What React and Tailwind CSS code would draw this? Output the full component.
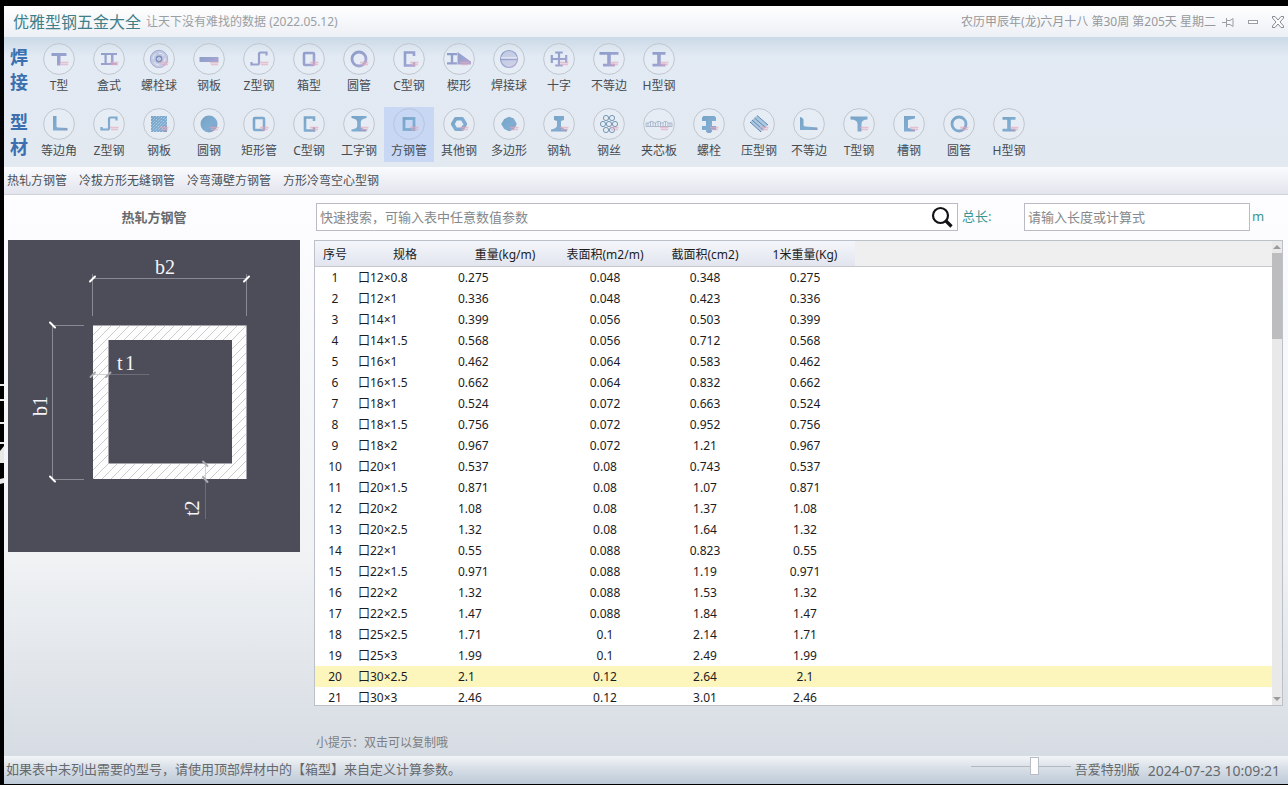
import React from 'react';

const ROWS = [
  ['口12×0.8', '0.275', '0.048', '0.348'],
  ['口12×1', '0.336', '0.048', '0.423'],
  ['口14×1', '0.399', '0.056', '0.503'],
  ['口14×1.5', '0.568', '0.056', '0.712'],
  ['口16×1', '0.462', '0.064', '0.583'],
  ['口16×1.5', '0.662', '0.064', '0.832'],
  ['口18×1', '0.524', '0.072', '0.663'],
  ['口18×1.5', '0.756', '0.072', '0.952'],
  ['口18×2', '0.967', '0.072', '1.21'],
  ['口20×1', '0.537', '0.08', '0.743'],
  ['口20×1.5', '0.871', '0.08', '1.07'],
  ['口20×2', '1.08', '0.08', '1.37'],
  ['口20×2.5', '1.32', '0.08', '1.64'],
  ['口22×1', '0.55', '0.088', '0.823'],
  ['口22×1.5', '0.971', '0.088', '1.19'],
  ['口22×2', '1.32', '0.088', '1.53'],
  ['口22×2.5', '1.47', '0.088', '1.84'],
  ['口25×2.5', '1.71', '0.1', '2.14'],
  ['口25×3', '1.99', '0.1', '2.49'],
  ['口30×2.5', '2.1', '0.12', '2.64'],
  ['口30×3', '2.46', '0.12', '3.01'],
];

const HEADERS = ['序号', '规格', '重量(kg/m)', '表面积(m2/m)', '截面积(cm2)', '1米重量(Kg)'];

const WELD = [
  ['T型', 'tee'], ['盒式', 'twin'], ['螺栓球', 'ball'], ['钢板', 'bar'], ['Z型钢', 'zed'],
  ['箱型', 'box'], ['圆管', 'ring'], ['C型钢', 'cee'], ['楔形', 'wedge'], ['焊接球', 'weldball'],
  ['十字', 'cross'], ['不等边', 'wideI'], ['H型钢', 'aitch'],
];

const SECTION = [
  ['等边角', 'angle'], ['Z型钢', 'zed'], ['钢板', 'plate'], ['圆钢', 'disc'], ['矩形管', 'box'],
  ['C型钢', 'cee'], ['工字钢', 'ibeam'], ['方钢管', 'square'], ['其他钢', 'hexring'], ['多边形', 'hex'],
  ['钢轨', 'rail'], ['钢丝', 'wire'], ['夹芯板', 'panel'], ['螺栓', 'bolt'], ['压型钢', 'deck'],
  ['不等边', 'unequal'], ['T型钢', 'teeRound'], ['槽钢', 'channel'], ['圆管', 'ring'], ['H型钢', 'aitch'],
];

const TABS = ['热轧方钢管', '冷拔方形无缝钢管', '冷弯薄壁方钢管', '方形冷弯空心型钢'];

function Shape({ kind, c }) {
  const line = { fill: 'none', stroke: c };
  switch (kind) {
    case 'tee': return <path fill={c} d="M-7.500-6H7.500V-3H1.500V6.500H-2V-3H-7.500Z" />;
    case 'teeRound': return <path fill={c} d="M-8.500-7.500H8.500V-4.500Q2.500-4.500 2.500 0V7.500H-1.500V0Q-1.500-4.500-8.500-4.500Z" />;
    case 'twin': return <path fill={c} d="M-8-6H8V-4H4.500V4H8V6H-8V4H-4.500V-4H-8ZM-2.300-4V4H2V-4Z" />;
    case 'ball': return (<>
      <circle r="8.700" fill={c} fillOpacity=".45" stroke={c} strokeWidth=".8" />
      <circle r="6" fill="none" stroke="#eef0f8" strokeOpacity=".8" strokeWidth="1" strokeDasharray="6 3" />
      <circle r="2.600" fill="#f3f4fa" stroke="#7f8fbc" strokeWidth="1.600" />
      <circle r=".8" fill="#7f8fbc" />
    </>);
    case 'bar': return <path fill={c} d="M-9.500-2H9.500V3H-9.500Z" />;
    case 'zed': return <path {...line} strokeWidth="2.200" d="M-7.500 3V5.500H-1.500Q0 5.500 0 4V-5Q0-6.500 1.500-6.500H7.500V-3.500" />;
    case 'box': return <rect {...line} x="-5" y="-6" width="10" height="12" rx="1" strokeWidth="2.600" />;
    case 'square': return <rect {...line} x="-5" y="-5.500" width="10" height="11" strokeWidth="2.800" />;
    case 'ring': return <circle {...line} r="7" strokeWidth="2.800" />;
    case 'cee': return <path {...line} strokeWidth="2.600" d="M5-3V-6.500H-4V6.500H5V3" />;
    case 'channel': return <path fill={c} d="M-5-8H6V-5.500L-1-4V4L6 5.500V7.500H-5Z" />;
    case 'wedge': return (<>
      <path fill={c} d="M-12-6H-2V-3.700H-5.800V3.200H-2V5.500H-12V3.200H-8.200V-3.700H-12Z" />
      <path fill={c} d="M-1.500-7L12 2.500V5.500H-1.500Z" />
    </>);
    case 'weldball': return (<>
      <circle r="8.500" fill={c} fillOpacity=".4" stroke={c} strokeWidth="1.200" />
      <path d="M-8-1H8" stroke="#eef1f9" strokeWidth="1.200" />
      <path d="M-8 .5H8" stroke={c} strokeWidth="1.400" />
    </>);
    case 'cross': return <path {...line} strokeWidth="2.200" d="M-7 0H7M0-6.500V6.500M-7.200-4V4M7.200-4V4M-3.800-6.500H3.800M-3.800 6.500H3.800" />;
    case 'wideI': return <path fill={c} d="M-9.500-7H9.500V-4.200H1.800V4.700H6V7.500H-6V4.700H-1.800V-4.200H-9.500Z" />;
    case 'aitch': return <path fill={c} d="M-6.500-7H6.500V-4.300H1.800V4.700H6.500V7.500H-6.500V4.700H-1.800V-4.300H-6.500Z" />;
    case 'ibeam': return <path fill={c} d="M-7.500-8H7.500V-6Q1.800-5 1.800-2V2Q1.800 4.500 7.500 5.500V7.500H-7.500V5.500Q-1.800 4.500-1.800 2V-2Q-1.800-5-7.500-6Z" />;
    case 'rail': return <path fill={c} d="M-5-8H5V-4L2-3V2Q3 4.800 8 5.500V7.500H-8V5.500Q-3 4.800-2 2V-3L-5-4Z" />;
    case 'angle': return <path fill={c} d="M-6-8H-2.500V2.500Q-2.500 3.500-1 3.500L8.500 4V6.500H-6Z" />;
    case 'unequal': return <path fill={c} d="M-9-7Q-5.500-6-5.500-4V1Q-5.500 2.500-3 2.500L8.500 3.500V6H-9Z" />;
    case 'plate': return (<>
      <rect x="-8" y="-8" width="16" height="16" fill={c} />
      <path d="M-8-5L-5-8M-8-2L-2-8M-8 1L1-8M-8 4L4-8M-8 7L7-8M-6 8L8-6M-3 8L8-3M0 8L8 0M3 8L8 3" stroke="#d5e7f5" strokeWidth=".8" strokeDasharray="1.200 1.200" />
    </>);
    case 'disc': return <circle r="8.500" fill={c} />;
    case 'hexring': return <path {...line} strokeWidth="3.600" strokeLinejoin="round" d="M-6.300 0L-3.300-5.200H3.300L6.300 0L3.300 5.200H-3.300Z" />;
    case 'hex': return <path fill={c} d="M-7.800 0L-4.800-5L0-7.300L4.800-5.500L7.800 0L4.800 5.500L0 7.300L-4.800 5Z" />;
    case 'wire': return (
      <g fill="none" stroke="#7397b5" strokeWidth="1">
        <circle r="2.600" /><circle cx="-6" r="2.600" /><circle cx="6" r="2.600" />
        <circle cx="-3" cy="-6" r="2.600" /><circle cx="3" cy="-6" r="2.600" />
        <circle cx="-3" cy="6" r="2.600" /><circle cx="3" cy="6" r="2.600" />
      </g>
    );
    case 'panel': return (
      <g fill="none" stroke="#9fb0c6" strokeWidth=".8">
        <path d="M-13 2.500V-1H-10L-9-2.500H-6L-5-1H-3L-2-2.500H1L2-1H4L5-2.500H8L9-1H13V2.500Z" />
        <path d="M-11-1V2.500M-8.500-2V2.500M-6-2V2.500M-3.500-1V2.500M-1-2V2.500M1.500-2V2.500M4-1V2.500M6.500-2V2.500M9-1V2.500M11-1V2.500" />
      </g>
    );
    case 'bolt': return <path fill={c} d="M-5.500-8H5.500L7-6.500V-3H3V2H7V6H3V7.500L1.500 9H-1.500L-3 7.500V6H-7V2H-3V-3H-7V-6.500Z" />;
    case 'deck': return (<>
      <path fill={c} fillOpacity=".55" d="M-9-2L-2-8.500L9 1L2 8Z" />
      <path d="M-9-2L2 8M-7-4L4.200 6M-4.500-6L6.500 3.500M-2-8.500L9 1" stroke="#5b88b3" strokeWidth="1" />
    </>);
    default: return null;
  }
}

function Profile({ kind, tone, active }) {
  const plain = ['angle', 'unequal', 'weldball'].includes(kind);
  return (
    <svg viewBox="-16 -16 32 32" className="size-8 shrink-0" aria-hidden="true">
      <circle r="15.400" fill="#ffffff" fillOpacity={active ? 0 : 0.16} stroke={active ? '#b9c4dc' : '#c0c6ce'} strokeWidth="1" />
      <Shape kind={kind} c={`url(#${tone})`} />
      {!plain && <path d="M1 3.500H9.500M2 5.500H9" stroke="#e3a9bd" strokeOpacity=".65" strokeWidth="1.500" />}
    </svg>
  );
}

function ToolRow({ title, items, tone, current }) {
  return (
    <div className="flex">
      <h2 className="w-[30px] shrink-0 pt-[3px] text-center text-[18px] leading-[25px] font-bold text-[#3a70b0]">
        {title[0]}<br />{title[1]}
      </h2>
      <nav className="flex" aria-label={title}>
        {items.map(([label, kind], i) => (
          <button
            key={i}
            type="button"
            className={'flex h-[55px] w-[50px] shrink-0 flex-col items-center pt-px text-[12px] leading-[22px] whitespace-nowrap text-[#474c52] ' + (i === current ? 'bg-[#c7d7f4]' : '')}
          >
            <Profile kind={kind} tone={tone} active={i === current} />
            {label}
          </button>
        ))}
      </nav>
    </div>
  );
}

function Drawing() {
  return (
    <svg viewBox="0 0 292 312" className="block w-full bg-[#4c4d58]" role="img" aria-label="热轧方钢管">
      <defs>
        <pattern id="hatch" width="9" height="9" patternUnits="userSpaceOnUse">
          <path d="M-2 2L2-2M0 9L9 0M7 11L11 7" stroke="#b4b6ba" strokeWidth=".7" />
        </pattern>
      </defs>
      <path fillRule="evenodd" fill="#fdfdfd" d="M85 85.500H238.500V239H85ZM100.500 100V223.500H224V100Z" />
      <path fillRule="evenodd" fill="url(#hatch)" d="M85 85.500H238.500V239H85ZM100.500 100V223.500H224V100Z" />
      <g stroke="#888992" strokeWidth="1" fill="none">
        <path d="M84.500 76V34M238.500 76V34M84.500 38.500H238.500" />
        <path d="M44.500 85.500H76M44.500 239.500H76M44.500 85.500V239.500" />
      </g>
      <g stroke="#6c6d76" strokeWidth="1">
        <path d="M100.500 134.500H141M197.500 239V279" />
      </g>
      <path d="M85 134.500H100M197.500 224V239" stroke="#d2d3d6" strokeWidth="1" />
      <g stroke="#fff" strokeWidth="2" strokeLinecap="round">
        <path d="M82 41.500L87 36.500M236 41.500L241 36.500M42 82.500L47 87.500M42 236.500L47 241.500" />
      </g>
      <g stroke="#a8a9ac" strokeWidth="2" strokeLinecap="round">
        <path d="M82.500 137L87 132.500M98 137L102.500 132.500M195 221.500L199.500 226M195 237L199.500 242" />
      </g>
      <g fill="#f4f4f8" className="font-['Liberation_Serif',serif] text-[20px]">
        <text x="147" y="34">b2</text>
        <text x="109 117" y="130">t1</text>
        <text transform="translate(39 176) rotate(-90)">b1</text>
        <text transform="translate(191 276) rotate(-90)">t2</text>
      </g>
    </svg>
  );
}

export default function App() {
  return (
    <div className="relative flex h-screen flex-col overflow-hidden bg-black pt-1.5 pb-px pl-1 font-['Noto_Sans','Noto_Sans_CJK_SC',sans-serif] text-[12px]">
      <svg width="0" height="0" className="absolute" aria-hidden="true">
        <defs>
          <linearGradient id="weld" gradientUnits="userSpaceOnUse" x1="-8" y1="-8" x2="8" y2="8">
            <stop offset="0" stopColor="#8c9dc8" /><stop offset=".6" stopColor="#9ba3d0" /><stop offset="1" stopColor="#b7a6d0" />
          </linearGradient>
          <linearGradient id="section" gradientUnits="userSpaceOnUse" x1="-8" y1="-8" x2="8" y2="8">
            <stop offset="0" stopColor="#76a2c3" /><stop offset=".6" stopColor="#80add3" /><stop offset="1" stopColor="#8b9abc" />
          </linearGradient>
        </defs>
      </svg>
      <svg viewBox="0 0 4 106" className="absolute top-[384px] left-0 h-[106px] w-1" aria-hidden="true">
        <path fill="#e8e8e6" d="M0 0H4V2H0ZM0 15H4V17H0ZM0 38H4V40H0ZM0 58H4V60H0ZM0 67L4 62V79H0ZM0 95L4 94V99L0 100Z" />
      </svg>

      <header className="flex h-[31px] shrink-0 items-center bg-linear-to-b from-white to-[#eceff5] pl-[9px]">
        <h1 className="text-[16px] leading-[24px] text-[#417f88]">优雅型钢五金大全</h1>
        <p className="pl-[5px] text-[#9b9fa3]">让天下没有难找的数据 (2022.05.12)</p>
        <p className="ml-auto text-[#96999d]">农历甲辰年(龙)六月十八 第30周 第205天 星期二</p>
        <div className="flex items-center gap-[13px] pl-1.5">
          <button type="button" aria-label="置顶">
            <svg viewBox="0 0 12 12" className="size-3" fill="none" stroke="#9a9da3"><path d="M0 6.500H4.500M4.500 2V11M4.500 4.500H8L11 2.500V10.500L8 8.500H4.500" /></svg>
          </button>
          <button type="button" aria-label="最小化">
            <svg viewBox="0 0 12 12" className="size-3" fill="#fff" stroke="#9a9da3"><rect x="1.500" y="4.500" width="9" height="3" /></svg>
          </button>
          <button type="button" aria-label="关闭" className="pr-1">
            <svg viewBox="0 0 12 12" className="size-3" fill="#fff" stroke="#858890"><path d="M.5.500H3L6 4L9 .5H11.500V2L8 6L11.500 10V11.500H9L6 8L3 11.500H.5V10L4 6L.5 2Z" /></svg>
          </button>
        </div>
      </header>

      <div className="flex shrink-0 flex-col gap-2.5 bg-linear-to-b from-[#cbdae7] via-[#e2eaf4] via-15% to-[#e3e9f0] pt-[5px] pb-[5px]">
        <ToolRow title="焊接" items={WELD} tone="weld" current={-1} />
        <ToolRow title="型材" items={SECTION} tone="section" current={7} />
      </div>

      <nav className="flex h-7 shrink-0 items-center gap-3 border-b border-[#cfd2d8] bg-linear-to-b from-[#fafbfe] to-[#e3e5ed] pl-[3px]" aria-label="类别">
        {TABS.map((t) => (
          <a key={t} href="#table" className="text-[#4b5157]">{t}</a>
        ))}
      </nav>

      <main className="flex min-h-0 flex-1 gap-3.5 bg-linear-to-b from-[#fdfdff] via-[#f0f2f4] via-65% to-[#d6dce3] pt-2 pr-[5px] pl-1">
        <section className="flex w-[292px] shrink-0 flex-col gap-[9px]">
          <h2 className="flex h-7 items-center justify-center pt-0.5 text-[13px] font-bold text-[#66696c]">热轧方钢管</h2>
          <Drawing />
        </section>

        <section className="flex min-w-0 flex-1 flex-col">
          <div className="flex h-7 shrink-0 items-center pl-0.5 text-[13px] text-[#3d9490]">
            <div className="flex h-7 min-w-0 flex-1 items-center border border-[#b9bcc4] bg-white">
              <input type="text" aria-label="快速搜索" placeholder="快速搜索，可输入表中任意数值参数" className="h-full min-w-0 flex-1 bg-transparent px-[3px] text-[#333] outline-none placeholder:text-[#85888c]" />
              <button type="button" aria-label="搜索" className="pr-1">
                <svg viewBox="0 0 22 24" className="h-6 w-[22px]" fill="none" stroke="#111116"><circle cx="9.500" cy="10.500" r="7.500" strokeWidth="2.200" /><path d="M15 16L20.500 21.500" strokeWidth="3.200" /></svg>
              </button>
            </div>
            <label htmlFor="length" className="w-[66px] pl-1">总长:</label>
            <input id="length" type="text" placeholder="请输入长度或计算式" className="h-7 w-[226px] border border-[#b9bcc4] bg-white px-[3px] text-[#333] outline-none placeholder:text-[#85888c]" />
            <span className="w-[33px] pl-0.5">m</span>
          </div>

          <div id="table" className="mt-[9px] flex min-h-0 flex-1 border border-[#bcc0c8] bg-white">
            <div className="min-w-0 flex-1 overflow-hidden">
              <table className="w-full table-fixed border-separate border-spacing-0 text-[#1c1c1e]">
                <colgroup>
                  <col className="w-10" />
                  <col className="w-[100px]" />
                  <col className="w-[100px]" />
                  <col className="w-[100px]" />
                  <col className="w-[100px]" />
                  <col className="w-[100px]" />
                  <col />
                </colgroup>
                <thead>
                  <tr className="h-[26px]">
                    {HEADERS.map((h) => (
                      <th key={h} scope="col" className="border-b border-[#c6c8ce] bg-linear-to-b from-[#f5f6fb] to-[#e2e5ef] p-0 pt-0.5 font-normal whitespace-nowrap">{h}</th>
                    ))}
                    <td className="border-b border-[#c6c8ce] bg-[#efefef] p-0" />
                  </tr>
                </thead>
                <tbody>
                  {ROWS.map(([spec, weight, surface, area], i) => (
                    <tr key={spec} className={'h-[21px] text-center leading-[21px] ' + (i === 19 ? 'bg-[#fcf6bd]' : '')}>
                      <td className="p-0">{i + 1}</td>
                      <td className="p-0 pl-[3px] text-left">{spec}</td>
                      <td className="p-0 pl-[3px] text-left">{weight}</td>
                      <td className="p-0">{surface}</td>
                      <td className="p-0">{area}</td>
                      <td className="p-0">{weight}</td>
                      <td className="p-0" />
                    </tr>
                  ))}
                </tbody>
              </table>
            </div>
            <div className="flex w-2.5 shrink-0 flex-col items-center bg-[#e9e9ea]" aria-hidden="true">
              <svg viewBox="0 0 10 12" className="h-3 w-2.5 shrink-0"><path fill="#9b9b9e" d="M1 8H9L5 4Z" /></svg>
              <div className="h-[86px] w-full bg-[#bdbdbf]" />
              <svg viewBox="0 0 10 12" className="mt-auto h-3 w-2.5 shrink-0"><path fill="#9b9b9e" d="M1 4H9L5 8Z" /></svg>
            </div>
          </div>
          <p className="flex h-[50px] shrink-0 items-end pb-1 pl-0.5 text-[#7b7f83]">小提示：双击可以复制哦</p>
        </section>
      </main>

      <footer className="flex h-7 shrink-0 items-center bg-linear-to-b from-[#f3f6f8] via-[#d7dee6] via-45% to-[#bdcad8] pr-2 pl-0.5 text-[13px] text-[#66696d]">
        <p>如果表中未列出需要的型号，请使用顶部焊材中的【箱型】来自定义计算参数。</p>
        <input
          type="range"
          aria-label="透明度"
          defaultValue="65"
          className="mr-1 mb-2 ml-auto h-[18px] w-[100px] appearance-none bg-transparent bg-[linear-gradient(#b3b8be,#b3b8be)] bg-[length:100%_1px] bg-center bg-no-repeat [&::-webkit-slider-thumb]:h-[18px] [&::-webkit-slider-thumb]:w-[9px] [&::-webkit-slider-thumb]:appearance-none [&::-webkit-slider-thumb]:border [&::-webkit-slider-thumb]:border-[#b9bec6] [&::-webkit-slider-thumb]:bg-white"
        />
        <p>吾爱特别版</p>
        <time className="pl-2 text-[14px]" dateTime="2024-07-23T10:09:21">2024-07-23 10:09:21</time>
      </footer>
    </div>
  );
}
